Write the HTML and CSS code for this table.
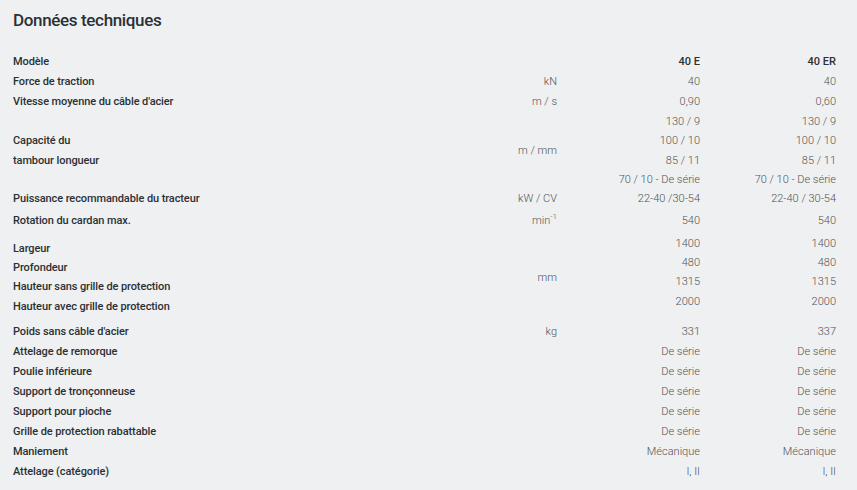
FILE: index.html
```html
<!DOCTYPE html>
<html lang="fr">
<head>
<meta charset="utf-8">
<title>Données techniques</title>
<link rel="stylesheet" href="styles.css">
</head>
<body>
<div class="page">
  <h2 class="title">Données techniques</h2>
  <table class="specs">
    <colgroup>
      <col class="c-label"><col class="c-unit"><col class="c-val"><col class="c-val2">
    </colgroup>
    <tbody>
      <tr class="row">
        <td class="label">Modèle</td><td class="unit"></td>
        <td class="val head">40 E</td><td class="val head">40 ER</td>
      </tr>
      <tr class="row">
        <td class="label">Force de traction</td><td class="unit">kN</td>
        <td class="val">40</td><td class="val">40</td>
      </tr>
      <tr class="row">
        <td class="label">Vitesse moyenne du câble d'acier</td><td class="unit">m / s</td>
        <td class="val">0,90</td><td class="val">0,60</td>
      </tr>
      <tr class="group g-cap">
        <td class="label multi">Capacité du<br>tambour longueur</td><td class="unit">m / mm</td>
        <td class="val multi">130 / 9<br>100 / 10<br>85 / 11<br>70 / 10 - De série</td>
        <td class="val multi">130 / 9<br>100 / 10<br>85 / 11<br>70 / 10 - De série</td>
      </tr>
      <tr class="row">
        <td class="label">Puissance recommandable du tracteur</td><td class="unit">kW / CV</td>
        <td class="val">22-40 /30-54</td><td class="val">22-40 / 30-54</td>
      </tr>
      <tr class="row r-rot">
        <td class="label">Rotation du cardan max.</td><td class="unit">min<sup>-1</sup></td>
        <td class="val">540</td><td class="val">540</td>
      </tr>
      <tr class="group g-dim">
        <td class="label multi">Largeur<br>Profondeur<br>Hauteur sans grille de protection<br>Hauteur avec grille de protection</td>
        <td class="unit">mm</td>
        <td class="val multi">1400<br>480<br>1315<br>2000</td>
        <td class="val multi">1400<br>480<br>1315<br>2000</td>
      </tr>
      <tr class="row">
        <td class="label">Poids sans câble d'acier</td><td class="unit">kg</td>
        <td class="val">331</td><td class="val">337</td>
      </tr>
      <tr class="row">
        <td class="label">Attelage de remorque</td><td class="unit"></td>
        <td class="val">De série</td><td class="val">De série</td>
      </tr>
      <tr class="row">
        <td class="label">Poulie inférieure</td><td class="unit"></td>
        <td class="val">De série</td><td class="val">De série</td>
      </tr>
      <tr class="row">
        <td class="label">Support de tronçonneuse</td><td class="unit"></td>
        <td class="val">De série</td><td class="val">De série</td>
      </tr>
      <tr class="row">
        <td class="label">Support pour pioche</td><td class="unit"></td>
        <td class="val">De série</td><td class="val">De série</td>
      </tr>
      <tr class="row">
        <td class="label">Grille de protection rabattable</td><td class="unit"></td>
        <td class="val">De série</td><td class="val">De série</td>
      </tr>
      <tr class="row">
        <td class="label">Maniement</td><td class="unit"></td>
        <td class="val">Mécanique</td><td class="val">Mécanique</td>
      </tr>
      <tr class="row">
        <td class="label">Attelage (catégorie)</td><td class="unit"></td>
        <td class="val">I, II</td><td class="val">I, II</td>
      </tr>
    </tbody>
  </table>
</div>
</body>
</html>
```

FILE: styles.css
```css
html, body {
  margin: 0;
  padding: 0;
  background: #eff0f1;
}

.page {
  padding: 9px 0 0 13px;
  font-family: Roboto, "Liberation Sans", sans-serif;
  color: #2b3035;
}

.title {
  margin: 0;
  font-size: 17px;
  line-height: 22px;
  font-weight: 500;
  color: #2b3035;
  letter-spacing: -0.35px;
}

.specs {
  margin-top: 21px;
  border-collapse: collapse;
  table-layout: fixed;
  width: 823px;
  font-size: 11px;
}

.c-label { width: 400px; }
.c-unit { width: 144px; }
.c-val { width: 143px; }
.c-val2 { width: 136px; }

.specs td {
  padding: 0;
  vertical-align: middle;
}

.row td { height: 20px; line-height: 20px; }
.r-rot td { height: 24px; }

.label {
  font-weight: 500;
  color: #2b3035;
  text-align: left;
  letter-spacing: -0.1px;
}

.unit, .val {
  text-align: right;
  font-weight: 300;
  color: #4f5458;
}

.val.head {
  font-weight: 500;
  color: #2b3035;
}

.multi { line-height: 19.3px; }

.g-cap td { height: 76px; }
.g-cap .val { vertical-align: top; padding-top: 0; }

.g-dim td { height: 88px; }
.g-dim .val { vertical-align: top; padding-top: 0.5px; }

sup {
  font-size: 8px;
  line-height: 0;
  vertical-align: 5px;
}
```
